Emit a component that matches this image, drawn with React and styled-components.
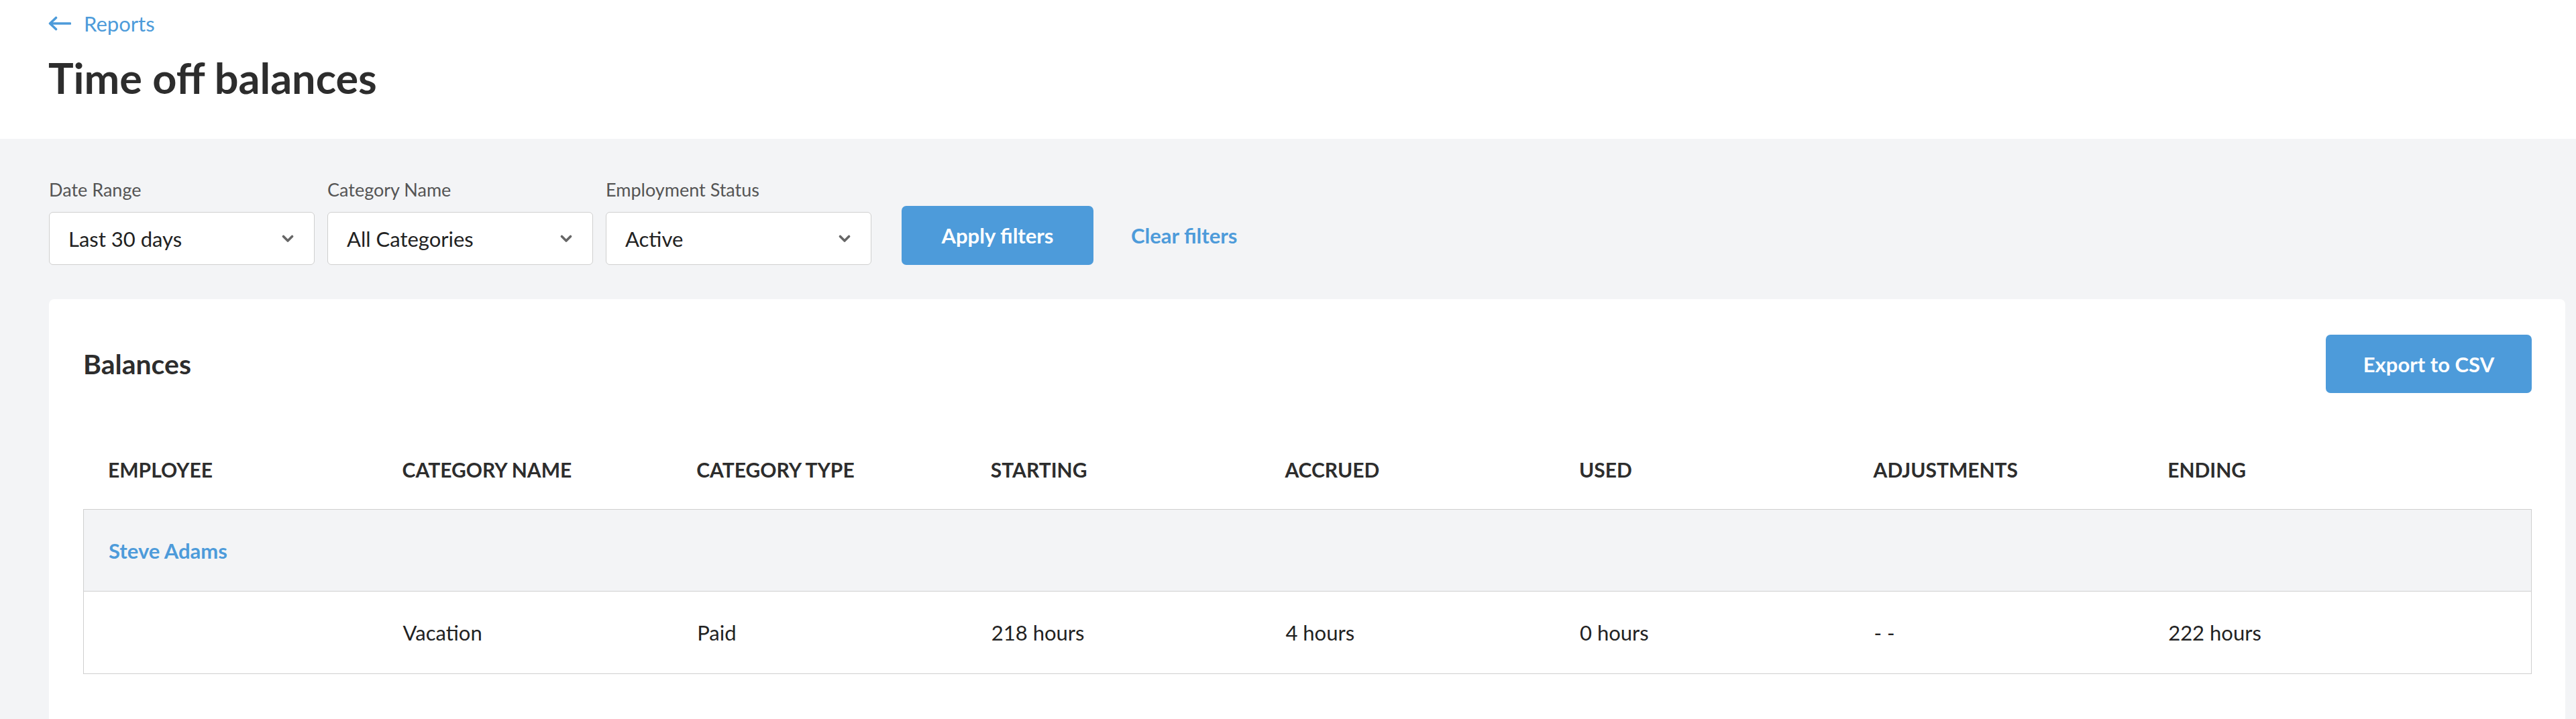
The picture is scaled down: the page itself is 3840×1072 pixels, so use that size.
import React from 'react';
import styled, { createGlobalStyle } from 'styled-components';

const GlobalStyle = createGlobalStyle`
    html, body {
        margin: 0;
        padding: 0;
        background: #f3f4f6;
        font-family: Lato, "Open Sans", sans-serif;
        color: #222;
    }
    * { box-sizing: border-box; }
`;

const BLUE = '#4d9bda';
const COL = 438.6;

const Header = styled.header`
    background: #fff;
    padding: 15px 16px 51px 72px;
`;

const BackLink = styled.a`
    display: flex;
    align-items: center;
    gap: 19px;
    height: 40px;
    color: ${BLUE};
    font-size: 31px;
    line-height: 40px;
    text-decoration: none;
`;

const Title = styled.h1`
    margin: 21px 0 0;
    font-size: 63px;
    line-height: 80px;
    font-weight: 700;
    color: #2d2d2d;
`;

const Main = styled.main`
    padding: 60px 16px 0 73px;
`;

const Filters = styled.div`
    display: flex;
    align-items: flex-end;
`;

const Field = styled.div`
    display: flex;
    flex-direction: column;
    margin-right: ${p => p.$gap || 19}px;
`;

const Label = styled.label`
    font-size: 27px;
    line-height: 32px;
    color: #555;
    margin-bottom: 17px;
`;

const Select = styled.div`
    width: 396px;
    height: 79px;
    display: flex;
    align-items: center;
    justify-content: space-between;
    padding: 0 30px 0 28px;
    background: #fff;
    border: 1px solid #cfcfcf;
    border-radius: 6px;
    font-size: 31px;
    color: #222;
`;

const Button = styled.button`
    width: ${p => p.$w}px;
    height: ${p => p.$h}px;
    border: none;
    border-radius: 7px;
    background: ${BLUE};
    color: #fff;
    font-family: inherit;
    font-size: 31px;
    font-weight: 700;
    padding: 0;
    cursor: pointer;
`;

const LinkButton = styled.a`
    margin-left: 56px;
    height: 88px;
    display: flex;
    align-items: center;
    color: ${BLUE};
    font-size: 31px;
    font-weight: 700;
`;

const Card = styled.section`
    margin-top: 51px;
    background: #fff;
    border-radius: 8px 8px 0 0;
    padding: 53px 50px 120px 51px;
`;

const CardHead = styled.div`
    display: flex;
    align-items: center;
    justify-content: space-between;
`;

const CardTitle = styled.h2`
    margin: 0;
    font-size: 41px;
    font-weight: 700;
    color: #2d2d2d;
`;

const Row = styled.div`
    display: grid;
    grid-template-columns: repeat(7, ${COL}px) 1fr;
    align-items: center;
    height: ${p => p.$h || 122}px;
    padding-left: 37px;
    background: ${p => p.$shade ? '#f3f4f6' : 'transparent'};
    border-top: ${p => p.$line ? '1px solid #cfcfcf' : 'none'};
    font-size: 31px;
`;

const HeadRow = styled(Row)`
    align-items: end;
    padding-bottom: 41px;
    font-size: 30px;
    font-weight: 700;
    color: #2d2d2d;
`;

const Table = styled.div`
    border: 1px solid #cfcfcf;
`;

const Name = styled.span`
    color: ${BLUE};
    font-weight: 700;
`;

const Chevron = () => (
    <svg width="18" height="12" viewBox="0 0 18 12">
        <path d="M2.5 2.5 L9 9 L15.5 2.5" fill="none" stroke="#666" strokeWidth="3.6" strokeLinecap="round" strokeLinejoin="round" />
    </svg>
);

const ArrowLeft = () => (
    <svg width="34" height="22" viewBox="0 0 34 22">
        <path d="M32.5 11 H3 M11.5 2.5 L2.5 11 L11.5 19.5" fill="none" stroke={BLUE} strokeWidth="3.6" strokeLinecap="round" strokeLinejoin="round" />
    </svg>
);

const filters = [
    { label: 'Date Range', value: 'Last 30 days' },
    { label: 'Category Name', value: 'All Categories' },
    { label: 'Employment Status', value: 'Active' },
];

const columns = ['EMPLOYEE', 'CATEGORY NAME', 'CATEGORY TYPE', 'STARTING', 'ACCRUED', 'USED', 'ADJUSTMENTS', 'ENDING'];
const entry = ['', 'Vacation', 'Paid', '218 hours', '4 hours', '0 hours', '- -', '222 hours'];

const App = () => {
    return (
        <>
            <GlobalStyle />
            <Header>
                <BackLink href="#">
                    <ArrowLeft />
                    Reports
                </BackLink>
                <Title>Time off balances</Title>
            </Header>
            <Main>
                <Filters>
                    {filters.map((f, i) => (
                        <Field key={f.label} $gap={i === filters.length - 1 ? 45 : 19}>
                            <Label>{f.label}</Label>
                            <Select>
                                <span>{f.value}</span>
                                <Chevron />
                            </Select>
                        </Field>
                    ))}
                    <Button $w={286} $h={88}>Apply filters</Button>
                    <LinkButton>Clear filters</LinkButton>
                </Filters>
                <Card>
                    <CardHead>
                        <CardTitle>Balances</CardTitle>
                        <Button $w={307} $h={87}>Export to CSV</Button>
                    </CardHead>
                    <HeadRow $h={173}>
                        {columns.map(c => <span key={c}>{c}</span>)}
                    </HeadRow>
                    <Table>
                        <Row $shade $h={121}>
                            <Name>Steve Adams</Name>
                        </Row>
                        <Row $line $h={123}>
                            {entry.map((v, i) => <span key={i}>{v}</span>)}
                        </Row>
                    </Table>
                </Card>
            </Main>
        </>
    );
};

export default App;
